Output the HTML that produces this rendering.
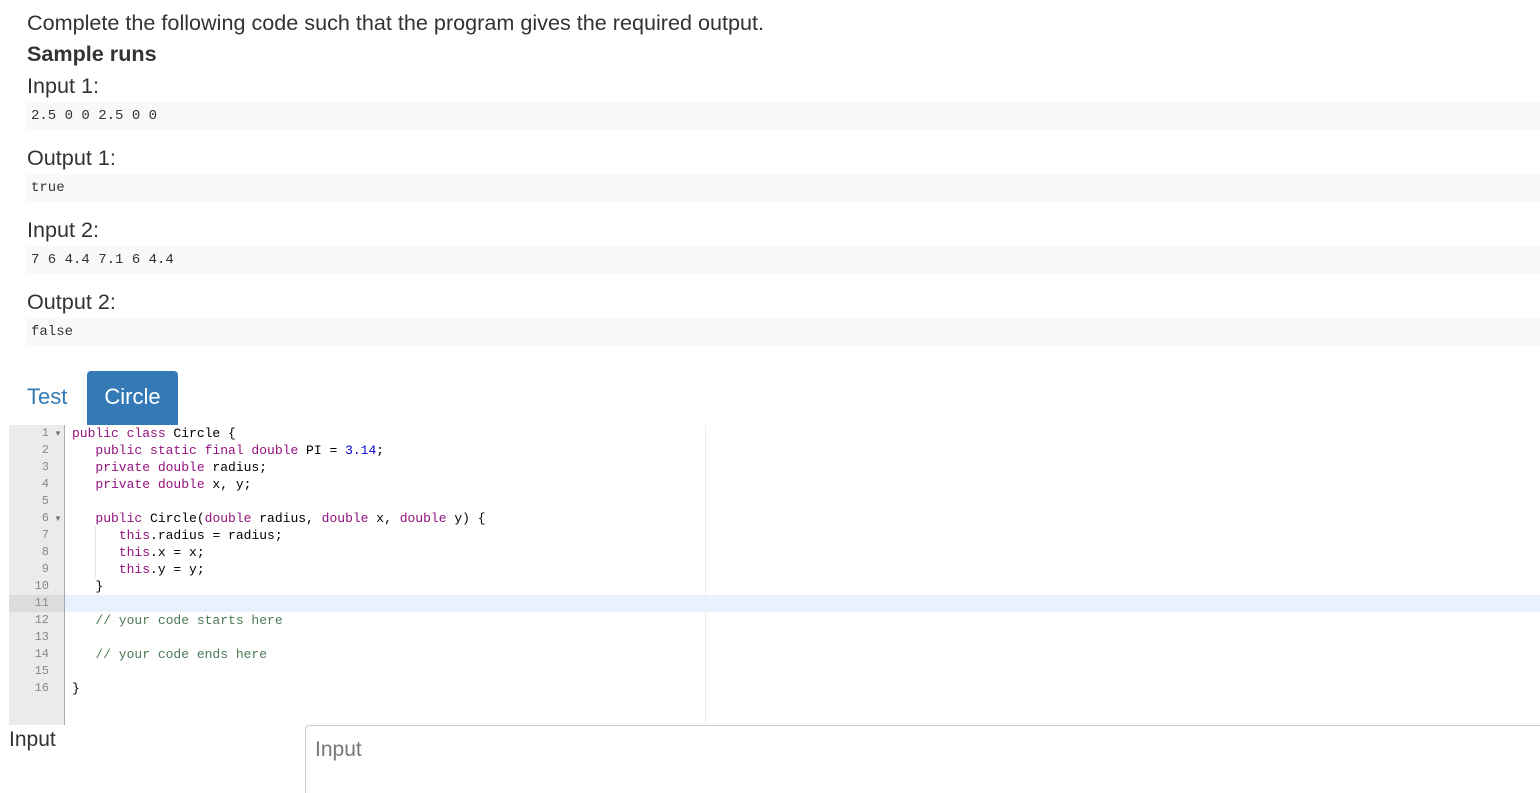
<!DOCTYPE html>
<html style="overflow:hidden;height:793px"><head><meta charset="utf-8"><style>
body{margin:0;width:1540px;height:793px;overflow:hidden;background:#fff;font-family:"Liberation Sans",Arial,sans-serif;color:#333;position:relative}
.a{position:absolute;white-space:pre}
.h{font-size:21.6px;line-height:24px;left:27px}
.pre{position:absolute;left:27px;right:0;height:28px;background:#f9f9f9;font-family:"Liberation Mono",monospace;font-size:14px;line-height:28px;padding-left:4px;color:#333;white-space:pre}
.ed{position:absolute;left:9px;top:425px;width:1531px;height:300px;background:#fff}
.gut{position:absolute;left:0;top:0;width:56px;height:300px;background:#ebebeb;border-right:1px solid #aaa;box-sizing:border-box}
.ln{position:absolute;left:0;width:40px;text-align:right;font-family:"Liberation Mono",monospace;font-size:12px;color:#888;height:17px;line-height:17px}
.cl{position:absolute;left:63px;font-family:"Liberation Mono",monospace;font-size:13px;line-height:17px;height:17px;white-space:pre;color:#000}
.k{color:#93117d}.n{color:#0000cd}.c{color:#4d7a56}
.f{position:absolute;left:45px;font-size:8px;color:#777;line-height:17px}
</style></head><body>
<div class="a h" style="top:11px">Complete the following code such that the program gives the required output.</div>
<div class="a h" style="top:42px;font-weight:bold">Sample runs</div>
<div class="a h" style="top:74px">Input 1:</div>
<div class="pre" style="top:102px">2.5 0 0 2.5 0 0</div>
<div class="a h" style="top:146px">Output 1:</div>
<div class="pre" style="top:174px">true</div>
<div class="a h" style="top:218px">Input 2:</div>
<div class="pre" style="top:246px">7 6 4.4 7.1 6 4.4</div>
<div class="a h" style="top:290px">Output 2:</div>
<div class="pre" style="top:318px">false</div>

<div class="a" style="left:27px;top:385px;font-size:22px;line-height:24px;color:#337ab7">Test</div>
<div class="a" style="left:87px;top:371px;width:91px;height:54px;background:#337ab7;border-radius:4px 4px 0 0;color:#fff;font-size:22px;line-height:52px;text-align:center">Circle</div>

<div class="ed">
<div style="position:absolute;left:56px;right:0;top:170px;height:17px;background:#e8f2ff"></div>
<div class="gut"><div style="position:absolute;left:0;right:0;top:170px;height:17px;background:#dcdcdc"></div></div>
<div style="position:absolute;left:696px;top:0;height:300px;border-left:1px solid #ececec"></div>
<div style="position:absolute;left:86px;top:102px;height:51px;border-left:1px dotted #ccc"></div>
<div class="ln" style="top:0">1</div><div class="f" style="top:0">▼</div>
<div class="ln" style="top:17px">2</div>
<div class="ln" style="top:34px">3</div>
<div class="ln" style="top:51px">4</div>
<div class="ln" style="top:68px">5</div>
<div class="ln" style="top:85px">6</div><div class="f" style="top:85px">▼</div>
<div class="ln" style="top:102px">7</div>
<div class="ln" style="top:119px">8</div>
<div class="ln" style="top:136px">9</div>
<div class="ln" style="top:153px">10</div>
<div class="ln" style="top:170px">11</div>
<div class="ln" style="top:187px">12</div>
<div class="ln" style="top:204px">13</div>
<div class="ln" style="top:221px">14</div>
<div class="ln" style="top:238px">15</div>
<div class="ln" style="top:255px">16</div>
<div class="cl" style="top:0"><span class="k">public class</span> Circle {</div>
<div class="cl" style="top:17px">   <span class="k">public static final double</span> PI = <span class="n">3.14</span>;</div>
<div class="cl" style="top:34px">   <span class="k">private double</span> radius;</div>
<div class="cl" style="top:51px">   <span class="k">private double</span> x, y;</div>
<div class="cl" style="top:85px">   <span class="k">public</span> Circle(<span class="k">double</span> radius, <span class="k">double</span> x, <span class="k">double</span> y) {</div>
<div class="cl" style="top:102px">      <span class="k">this</span>.radius = radius;</div>
<div class="cl" style="top:119px">      <span class="k">this</span>.x = x;</div>
<div class="cl" style="top:136px">      <span class="k">this</span>.y = y;</div>
<div class="cl" style="top:153px">   }</div>
<div class="cl c" style="top:187px">   // your code starts here</div>
<div class="cl c" style="top:221px">   // your code ends here</div>
<div class="cl" style="top:255px">}</div>
</div>

<div class="a" style="left:9px;top:728px;font-size:21px;line-height:24px;color:#333">Input</div>
<div style="position:absolute;left:305px;top:725px;width:1240px;height:68px;border:1px solid #ccc;border-bottom:none;border-radius:4px 4px 0 0;box-sizing:border-box"></div>
<div class="a" style="left:315px;top:738px;font-size:21px;line-height:24px;color:#777">Input</div>
</body></html>
